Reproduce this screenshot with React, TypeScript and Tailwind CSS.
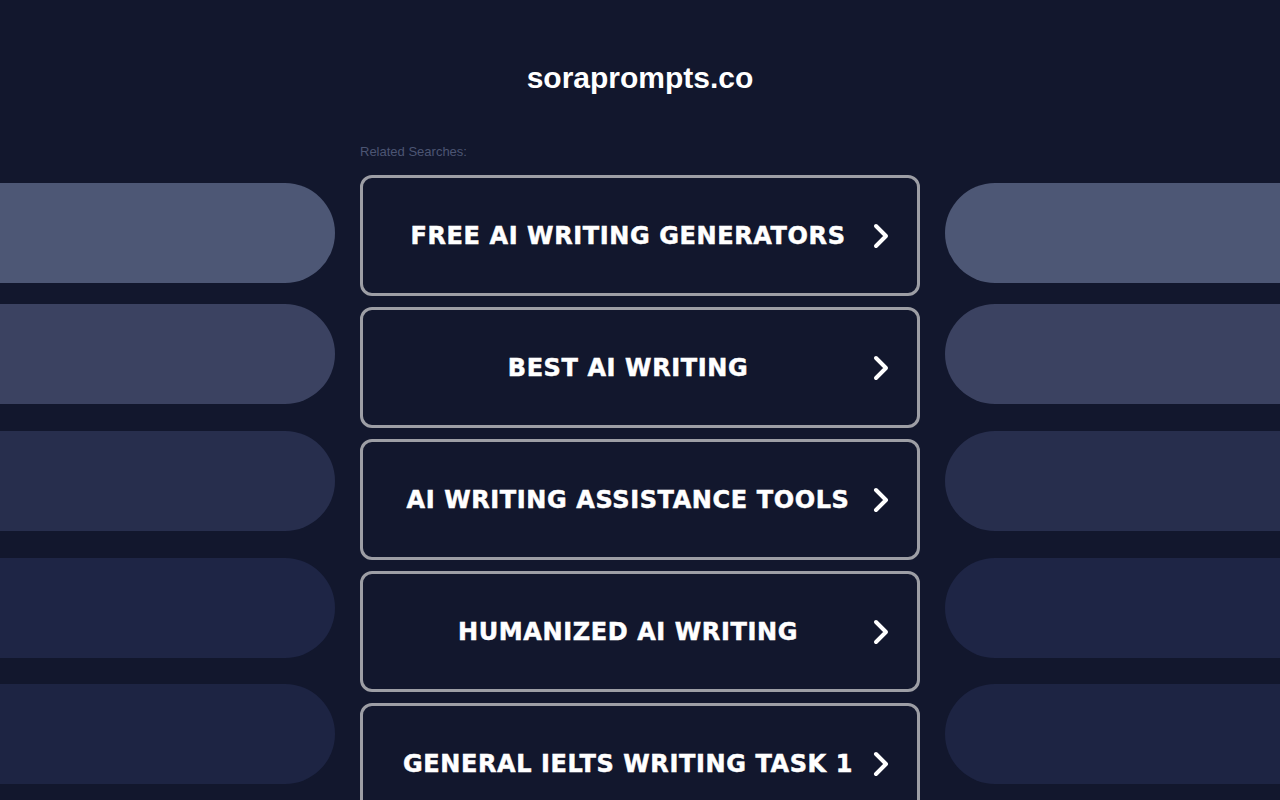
const searches = [
  "FREE AI WRITING GENERATORS",
  "BEST AI WRITING",
  "AI WRITING ASSISTANCE TOOLS",
  "HUMANIZED AI WRITING",
  "GENERAL IELTS WRITING TASK 1",
]

// side pills: colour + gap above
const pills = [
  { bg: "bg-[#4d5775]", mt: "mt-[183px]" },
  { bg: "bg-[#3b4261]", mt: "mt-[21px]" },
  { bg: "bg-[#272e4d]", mt: "mt-[27px]" },
  { bg: "bg-[#1e2545]", mt: "mt-[27px]" },
  { bg: "bg-[#1d2443]", mt: "mt-[26px]" },
]

function Chevron() {
  return (
    <svg width="22" height="28" viewBox="0 0 22 28" fill="none" className="shrink-0 ml-[-23px]">
      <path d="M6 4 L16 14 L6 24" stroke="white" strokeWidth="4" strokeLinecap="round" strokeLinejoin="round" />
    </svg>
  )
}

function SidePills({ side }: { side: "left" | "right" }) {
  return (
    <div className="w-[335px] shrink-0 flex flex-col">
      {pills.map((p, i) => (
        <div
          key={i}
          className={`${p.mt} ${p.bg} h-[100px] ${side === "left" ? "rounded-r-full" : "rounded-l-full"}`}
        />
      ))}
    </div>
  )
}

export default function App() {
  return (
    <div className="w-full h-[800px] overflow-hidden bg-[#12172d] flex justify-between">
      <SidePills side="left" />
      <div className="w-[560px] shrink-0 flex flex-col">
        <h1 className="mt-[60px] text-center text-white text-[30px] leading-[36px] font-bold font-['Liberation_Sans',Arial,sans-serif]">
          soraprompts.co
        </h1>
        <div className="mt-[49px] text-[13px] leading-[14px] text-[#4c5573] font-['Liberation_Sans',Arial,sans-serif]">
          Related Searches:
        </div>
        <div className="mt-[16px] flex flex-col gap-[11px]">
          {searches.map((s) => (
            <a
              key={s}
              href="#"
              className="h-[121px] shrink-0 rounded-[12px] border-[3px] border-[#9d9ea5] bg-[#12172d] flex items-center pr-[25px]"
            >
              <span className="flex-1 text-center text-white text-[24px] font-bold tracking-[0.6px] [-webkit-text-stroke:0.5px_white] font-['DejaVu_Sans',Verdana,sans-serif]">
                {s}
              </span>
              <Chevron />
            </a>
          ))}
        </div>
      </div>
      <SidePills side="right" />
    </div>
  )
}
